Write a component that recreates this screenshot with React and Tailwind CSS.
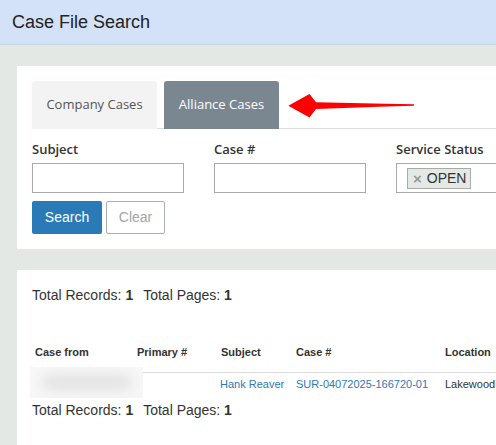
import React from "react";

const arial = { fontFamily: '"Liberation Sans", Arial, sans-serif' };
const open = { fontFamily: '"Open Sans", "Liberation Sans", sans-serif' };

function Arrow() {
  return (
    <svg
      className="absolute left-[254px] top-[11px]"
      width="132"
      height="28"
      viewBox="0 0 132 28"
    >
      <polygon
        points="2.3,13.7 23.5,2 30,10.2 100,11.8 128,12.2 128,13.8 100,14.6 30,17 23.5,25.5"
        fill="#ff0000"
      />
    </svg>
  );
}

export default function App() {
  return (
    <div className="w-[496px] h-[445px] overflow-hidden bg-[#e3e8e4]" style={arial}>
      <div className="h-[45px] bg-[#d3e2f9] border-b border-[#c6d2e0] flex items-center pl-[12px]">
        <h1 className="text-[18px] text-[#222] leading-none" style={arial}>
          Case File Search
        </h1>
      </div>

      <div className="ml-[17px] mt-[21px] w-[620px] bg-white px-[15px] pt-[15px] pb-[15px]">
        <div className="relative flex gap-[7px] border-b border-[#dddddd] h-[48px]" style={open}>
          <div className="w-[125px] h-[48px] bg-[#f3f3f3] rounded-t-[3px] flex items-center justify-center text-[13px] text-[#555]">
            Company Cases
          </div>
          <div className="w-[115px] h-[48px] bg-[#7a8690] rounded-t-[3px] flex items-center justify-center text-[13px] text-white">
            Alliance Cases
          </div>
          <Arrow />
        </div>

        <div className="flex gap-[30px] mt-[11px]" style={open}>
          <div className="w-[152px]">
            <div className="text-[13px] font-semibold text-[#333] leading-[18px]">Subject</div>
            <div className="mt-[5px] h-[30px] border border-[#aaaaaa]"></div>
          </div>
          <div className="w-[152px]">
            <div className="text-[13px] font-semibold text-[#333] leading-[18px]">Case #</div>
            <div className="mt-[5px] h-[30px] border border-[#aaaaaa]"></div>
          </div>
          <div className="w-[200px]">
            <div className="text-[13px] font-semibold text-[#333] leading-[18px]">Service Status</div>
            <div className="mt-[5px] h-[30px] border border-[#aaaaaa] flex items-center pl-[10px]">
              <span
                className="h-[21px] pl-[5px] pr-[4px] flex items-center gap-[5px] bg-[#e4e9e6] border border-[#aaaaaa] text-[14px] text-[#333]"
                style={arial}
              >
                <span className="text-[#999] text-[15px] font-bold leading-none">×</span>
                <span className="leading-none">OPEN</span>
              </span>
            </div>
          </div>
        </div>

        <div className="flex gap-[4px] mt-[8px]" style={arial}>
          <button className="w-[70px] h-[33px] bg-[#2a7ab7] text-white text-[14px] rounded-[2px]">
            Search
          </button>
          <button className="w-[59px] h-[33px] bg-white border border-[#a9b0b3] text-[#a0a6aa] text-[14px] rounded-[2px]">
            Clear
          </button>
        </div>
      </div>

      <div className="ml-[17px] mt-[21px] w-[620px] h-[200px] bg-white px-[15px] pt-[15px]" style={arial}>
        <div className="text-[14px] text-[#333] leading-[20px] flex gap-[10px]">
          <span>
            Total Records: <b>1</b>
          </span>
          <span>
            Total Pages: <b>1</b>
          </span>
        </div>

        <div className="relative mt-[28px] text-[11px]">
          <div className="grid grid-cols-[102px_84px_75px_149px_1fr] h-[40px] items-center border-b border-[#dddddd] font-bold text-[#333]">
            <div className="pl-[3px]">Case from</div>
            <div className="pl-[3px]">Primary #</div>
            <div className="pl-[3px]">Subject</div>
            <div className="pl-[3px]">Case #</div>
            <div className="pl-[3px]">Location</div>
          </div>
          <div className="grid grid-cols-[102px_84px_75px_149px_1fr] h-[23px] items-center">
            <div></div>
            <div></div>
            <div className="pl-[2px] text-[#2f77b8]">Hank Reaver</div>
            <div className="pl-[3px] text-[#2f77b8]">SUR-04072025-166720-01</div>
            <div className="pl-[3px] text-[#333]">Lakewood</div>
          </div>
          <div className="absolute left-[-2px] top-[34px] w-[113px] h-[31px] bg-[#f7f7f7] overflow-hidden">
            <div className="absolute left-[12px] top-[8px] w-[90px] h-[15px] rounded-full bg-[#e2e2e2] blur-[6px]"></div>
          </div>
        </div>

        <div className="text-[14px] text-[#333] leading-[20px] flex gap-[10px] mt-[4px]">
          <span>
            Total Records: <b>1</b>
          </span>
          <span>
            Total Pages: <b>1</b>
          </span>
        </div>
      </div>
    </div>
  );
}
